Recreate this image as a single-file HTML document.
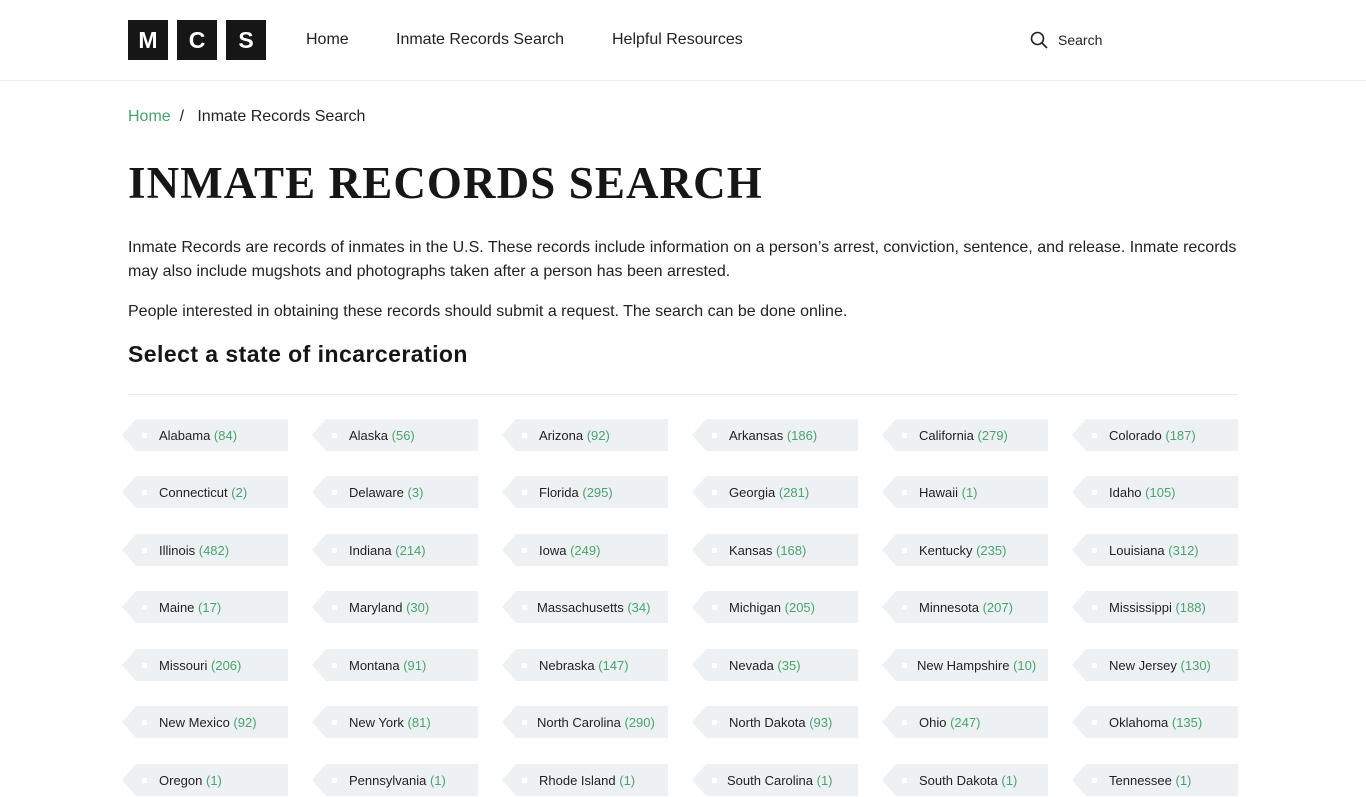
<!DOCTYPE html>
<html><head><meta charset="utf-8"><style>
*{margin:0;padding:0;box-sizing:border-box}
body{width:1366px;height:768px;overflow:hidden;background:#fff;font-family:"Liberation Sans",Arial,sans-serif;color:#222}
.hdr{height:81px;border-bottom:1px solid #ebebeb;position:relative}
.logo{position:absolute;left:128px;top:20px;display:flex;gap:9px}
.logo span{width:40px;height:40px;background:#161616;color:#fff;font-weight:bold;font-size:23px;display:flex;align-items:center;justify-content:center}
.nav{position:absolute;top:31px;font-size:16px;color:#222}
.srch{position:absolute;left:1030px;top:31px;font-size:14px;display:flex;align-items:center;gap:10px}
.bc{position:absolute;left:128px;top:108px;font-size:16px}
.bc a{color:#4aa36c;text-decoration:none}
h1{position:absolute;left:128px;top:157px;font-family:"Liberation Serif",serif;font-size:45px;letter-spacing:1.1px;font-weight:bold;color:#161616}
.p{position:absolute;left:128px;width:1115px;font-size:16px;line-height:24px;color:#222}
h2{position:absolute;left:128px;top:341px;font-size:23px;letter-spacing:0.45px;font-weight:bold;color:#161616}
.hr{position:absolute;left:128px;top:394px;width:1110px;height:1px;background:#ebebeb}
.tag{position:absolute;width:166px;height:32px;background:#eef1f4;clip-path:polygon(14px 0,100% 0,100% 100%,14px 100%,0 50%);font-size:13px;line-height:33px;padding-left:37px;color:#222;white-space:nowrap}
.tag:before{content:"";position:absolute;left:20px;top:14px;width:5px;height:5px;background:#fff;border-radius:1px}
.tag i{font-style:normal;color:#4aa36c}
</style></head><body>
<div class="hdr">
<div class="logo"><span>M</span><span>C</span><span>S</span></div>
<div class="nav" style="left:306px">Home</div>
<div class="nav" style="left:396px">Inmate Records Search</div>
<div class="nav" style="left:612px">Helpful Resources</div>
<div class="srch"><svg width="18" height="18" viewBox="0 0 18 18" fill="none" stroke="#222" stroke-width="1.6"><circle cx="7.5" cy="7.5" r="6"/><path d="M12 12l5 5"/></svg>Search</div>
</div>
<div class="bc"><a>Home</a>&nbsp; / &nbsp;&nbsp;Inmate Records Search</div>
<h1>INMATE RECORDS SEARCH</h1>
<div class="p" style="top:236px">Inmate Records are records of inmates in the U.S. These records include information on a person’s arrest, conviction, sentence, and release. Inmate records may also include mugshots and photographs taken after a person has been arrested.</div>
<div class="p" style="top:300px">People interested in obtaining these records should submit a request. The search can be done online.</div>
<h2>Select a state of incarceration</h2>
<div class="hr"></div>
<div id="tags"></div>
<script>
var d=[["Alabama",84],["Alaska",56],["Arizona",92],["Arkansas",186],["California",279],["Colorado",187],["Connecticut",2],["Delaware",3],["Florida",295],["Georgia",281],["Hawaii",1],["Idaho",105],["Illinois",482],["Indiana",214],["Iowa",249],["Kansas",168],["Kentucky",235],["Louisiana",312],["Maine",17],["Maryland",30],["Massachusetts",34],["Michigan",205],["Minnesota",207],["Mississippi",188],["Missouri",206],["Montana",91],["Nebraska",147],["Nevada",35],["New Hampshire",10],["New Jersey",130],["New Mexico",92],["New York",81],["North Carolina",290],["North Dakota",93],["Ohio",247],["Oklahoma",135],["Oregon",1],["Pennsylvania",1],["Rhode Island",1],["South Carolina",1],["South Dakota",1],["Tennessee",1]];
var tops=[419,476,534,591,649,706,764],h="";
d.forEach(function(s,i){var r=Math.floor(i/6),c=i%6;var pl=(s[0].length>12)?'padding-left:35px;':'';h+='<div class="tag" style="'+pl+'left:'+(122+c*190)+'px;top:'+tops[r]+'px">'+s[0]+' <i>('+s[1]+')</i></div>';});
document.getElementById("tags").innerHTML=h;
</script>
</body></html>
